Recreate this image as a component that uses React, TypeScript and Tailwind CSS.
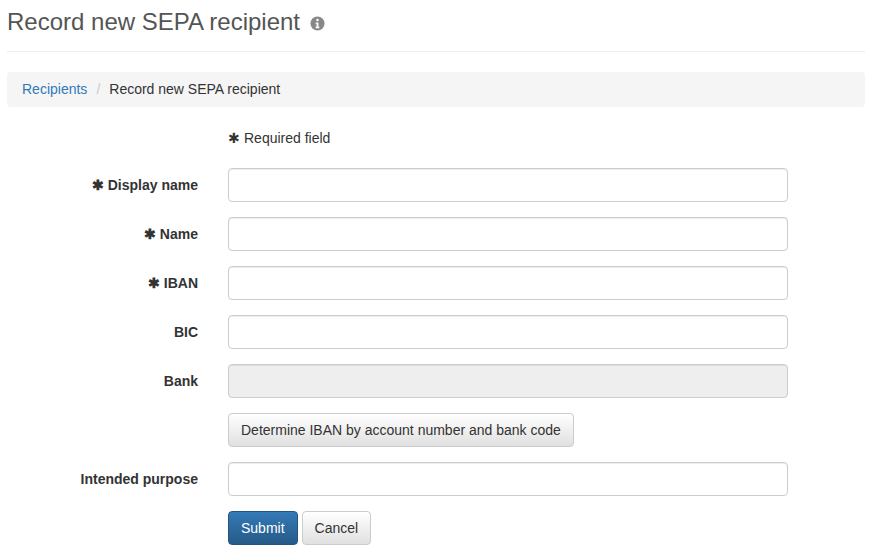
const font = { fontFamily: '"Liberation Sans", Arial, sans-serif' };

const Star = () => <span className="mr-1">✱</span>;

const Row = ({ label, req, children }: { label?: string; req?: boolean; children: React.ReactNode }) => (
  <div className="flex items-center mb-[15px]">
    <div className="w-[206px] pr-[15px] text-right font-bold text-[14px] text-[#333]">
      {req && <Star />}
      {label}
    </div>
    <div className="pl-[15px]">{children}</div>
  </div>
);

const Input = ({ disabled }: { disabled?: boolean }) => (
  <input
    disabled={disabled}
    className={`block w-[560px] h-[34px] rounded-[4px] border border-[#ccc] shadow-[inset_0_1px_1px_rgba(0,0,0,0.075)] px-3 ${disabled ? "bg-[#eee]" : "bg-white"}`}
  />
);

export default function App() {
  return (
    <div className="bg-white min-h-[560px] px-[7px] text-[14px] text-[#333]" style={font}>
      <div className="pt-[7px] pb-[14px] border-b border-[#eee] flex items-center">
        <h1 className="text-[24px] text-[#555] leading-[30px]">Record new SEPA recipient</h1>
        <svg width="15" height="15" viewBox="0 0 16 16" className="ml-[10px] mt-[2px]">
          <circle cx="8" cy="8" r="7.5" fill="#888" />
          <circle cx="8" cy="4.3" r="1.3" fill="#fff" />
          <path d="M6 7h3v4.5h1V13H6v-1.5h1V8.3H6z" fill="#fff" />
        </svg>
      </div>
      <div className="mt-[20px] h-[35px] bg-[#f5f5f5] rounded-[4px] flex items-center px-[15px]">
        <span className="text-[#337ab7]">Recipients</span>
        <span className="text-[#ccc] px-[9px]">/</span>
        <span>Record new SEPA recipient</span>
      </div>
      <div className="mt-[21px] mb-[20px] pl-[221px] leading-[20px]">
        <Star />Required field
      </div>
      <Row label="Display name" req><Input /></Row>
      <Row label="Name" req><Input /></Row>
      <Row label="IBAN" req><Input /></Row>
      <Row label="BIC"><Input /></Row>
      <Row label="Bank"><Input disabled /></Row>
      <Row>
        <button className="h-[34px] px-3 rounded-[4px] border border-[#ccc] bg-gradient-to-b from-white to-[#e0e0e0] text-[#333]">
          Determine IBAN by account number and bank code
        </button>
      </Row>
      <Row label="Intended purpose"><Input /></Row>
      <Row>
        <div className="flex gap-[4px]">
          <button className="h-[34px] px-3 rounded-[4px] border border-[#245580] bg-gradient-to-b from-[#337ab7] to-[#265a88] text-white">Submit</button>
          <button className="h-[34px] px-3 rounded-[4px] border border-[#ccc] bg-gradient-to-b from-white to-[#e0e0e0] text-[#333]">Cancel</button>
        </div>
      </Row>
    </div>
  );
}
